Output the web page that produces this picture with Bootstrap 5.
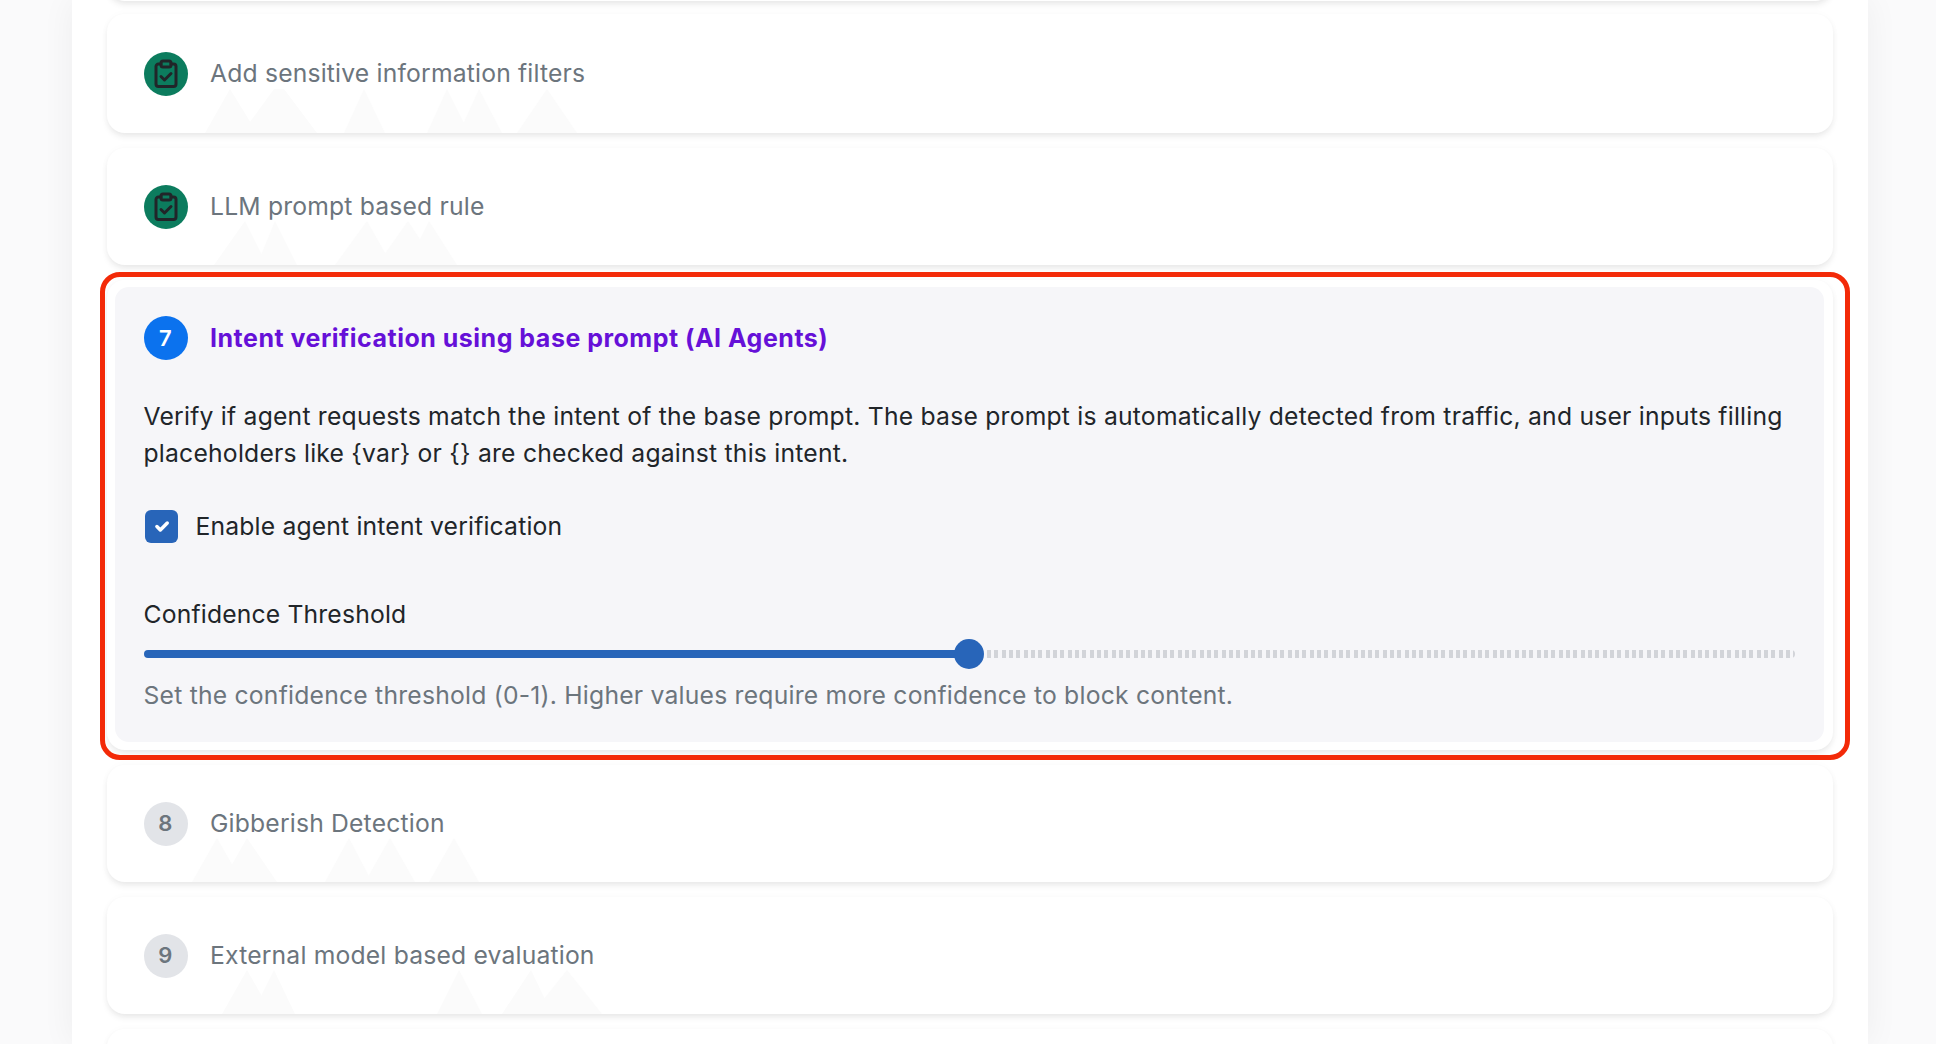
<!DOCTYPE html>
<html lang="en">
<head>
<meta charset="utf-8">
<title>Rules</title>
<link href="https://cdn.jsdelivr.net/npm/bootstrap@5.3.0/dist/css/bootstrap.min.css" rel="stylesheet">
<style>
html,body{height:1044px;overflow:hidden}
body{background:#fafafb;font-family:Inter,"Liberation Sans",sans-serif;font-size:24.7px;line-height:37px;letter-spacing:.22px;color:#212529}
.sheet{margin:0 68px 0 72px;height:1044px;background:#fff;box-shadow:0 0 32px rgba(0,0,0,.055);padding:0 35px;overflow:hidden}
.stack{gap:15px;margin-top:-116px}
.step{height:117px;border:0;border-radius:18px;background:#fff;box-shadow:0 4px 7px -1px rgba(0,0,0,.09),0 0 8px rgba(0,0,0,.025);position:relative;padding:0 36.5px;color:#6c757d}
.step-stub{margin-bottom:-2px}
.step-tall{height:119px}
.ghost{position:absolute;left:0;bottom:0;width:600px;height:44px}
.ghost polygon{fill:#fbfbfb}
.dot{width:44px;height:44px;flex:none;border-radius:50%;margin-right:22.5px;font-weight:600;font-size:22px;position:relative}
.dot-done{background:#0c7c5e}
.dot-idle{background:#e2e4e8;color:#6c757d}
.dot-now{background:#0b72ee;color:#fff}
.step-label{position:relative;letter-spacing:.18px}
.active-wrap{position:relative}
.step-open{height:auto;padding:7px 9px 8.5px 7.5px;color:#212529}
.open-inner{background:#f6f6f9;border-radius:14px;padding:29px 29px 28px}
.open-title{font-weight:700;font-size:25px;letter-spacing:.5px;color:#6610d8}
.open-text{margin:37.5px 0 36px}
.check-row{margin:0 0 51px;padding:0;min-height:37px;display:flex;align-items:center;letter-spacing:.17px}
.check-row .form-check-input{width:33px;height:33px;margin:0 17.5px 0 1.5px;float:none;border:0;border-radius:6px;background-size:23px;background-color:#2865b9}
.check-row .form-check-label{opacity:1}
.range-label{margin:0 0 6.5px;display:block;letter-spacing:.17px}
.slider{display:block;height:30px;padding:0;background:transparent}
.slider::-webkit-slider-runnable-track{height:8px;border-radius:4px;background:
  linear-gradient(#2865b9,#2865b9) left/826px 100% no-repeat,
  repeating-linear-gradient(90deg,#d2d4d9 0 4px,transparent 4px 7.33px) 843px 0/810px 100% no-repeat}
.slider::-webkit-slider-thumb{width:30px;height:30px;margin-top:-11px;background:#2865b9;border:0;border-radius:50%;-webkit-appearance:none}
.slider:focus::-webkit-slider-thumb{box-shadow:none}
.hint{margin:7.5px 0 0;color:#6c757d}
.callout{position:absolute;left:-7px;right:-17px;top:-8px;bottom:-10px;border:5px solid #f32a08;border-radius:20px;pointer-events:none}
</style>
</head>
<body>
<div class="sheet">
  <div class="stack d-flex flex-column">
    <div class="card step step-stub"></div>

    <div class="card step step-tall flex-row align-items-center">
      <svg class="ghost" viewBox="0 0 600 44"><polygon points="98,44 123,0 150,44"/><polygon points="135,44 167,0 177,0 210,44"/><polygon points="237,44 257,0 278,44"/><polygon points="320,44 340,0 362,44"/><polygon points="352,44 372,0 395,44"/><polygon points="410,44 440,0 470,44"/></svg>
      <span class="dot dot-done d-flex align-items-center justify-content-center">
        <svg width="26" height="30" viewBox="0 0 26 30" fill="none" stroke="#212529" stroke-width="3" stroke-linejoin="round" stroke-linecap="round"><path d="M8 5H5.5A2.5 2.5 0 0 0 3 7.500V25a2.500 2.500 0 0 0 2.500 2.500h15A2.500 2.500 0 0 0 23 25V7.500A2.500 2.500 0 0 0 20.500 5H18"/><rect x="8" y="2" width="10" height="6" rx="2"/><path d="M8 17.500l3.500 3.500 6.500-6.500"/></svg>
      </span>
      <span class="step-label">Add sensitive information filters</span>
    </div>

    <div class="card step flex-row align-items-center">
      <svg class="ghost" viewBox="0 0 600 44"><polygon points="107,44 138,0 160,44"/><polygon points="150,44 168,0 190,44"/><polygon points="228,44 260,0 285,44"/><polygon points="270,44 301,0 330,44"/><polygon points="300,44 322,0 350,44"/></svg>
      <span class="dot dot-done d-flex align-items-center justify-content-center">
        <svg width="26" height="30" viewBox="0 0 26 30" fill="none" stroke="#212529" stroke-width="3" stroke-linejoin="round" stroke-linecap="round"><path d="M8 5H5.500A2.500 2.500 0 0 0 3 7.500V25a2.500 2.500 0 0 0 2.500 2.500h15A2.500 2.500 0 0 0 23 25V7.500A2.500 2.500 0 0 0 20.500 5H18"/><rect x="8" y="2" width="10" height="6" rx="2"/><path d="M8 17.500l3.500 3.500 6.500-6.500"/></svg>
      </span>
      <span class="step-label">LLM prompt based rule</span>
    </div>

    <div class="active-wrap">
      <div class="card step step-open">
        <div class="open-inner">
          <div class="d-flex align-items-center">
            <span class="dot dot-now d-flex align-items-center justify-content-center">7</span>
            <span class="open-title">Intent verification using base prompt (AI Agents)</span>
          </div>
          <p class="open-text">Verify if agent requests match the intent of the base prompt. The base prompt is automatically detected from traffic, and user inputs filling placeholders like {var} or {} are checked against this intent.</p>
          <div class="form-check check-row">
            <input class="form-check-input" type="checkbox" id="agentIntent" checked>
            <label class="form-check-label" for="agentIntent">Enable agent intent verification</label>
          </div>
          <label class="form-label range-label" for="confidence">Confidence Threshold</label>
          <input class="form-range slider" type="range" id="confidence" min="0" max="1" step="0.01" value="0.5">
          <p class="hint">Set the confidence threshold (0-1). Higher values require more confidence to block content.</p>
        </div>
      </div>
      <div class="callout"></div>
    </div>

    <div class="card step flex-row align-items-center">
      <svg class="ghost" viewBox="0 0 600 44"><polygon points="85,44 110,0 135,44"/><polygon points="115,44 140,0 170,44"/><polygon points="218,44 242,0 265,44"/><polygon points="258,44 283,0 308,44"/><polygon points="322,44 347,0 372,44"/></svg>
      <span class="dot dot-idle d-flex align-items-center justify-content-center">8</span>
      <span class="step-label">Gibberish Detection</span>
    </div>

    <div class="card step flex-row align-items-center">
      <svg class="ghost" viewBox="0 0 600 44"><polygon points="115,44 140,0 165,44"/><polygon points="145,44 167,0 188,44"/><polygon points="330,44 352,0 375,44"/><polygon points="395,44 424,0 445,44"/><polygon points="425,44 460,0 495,44"/></svg>
      <span class="dot dot-idle d-flex align-items-center justify-content-center">9</span>
      <span class="step-label">External model based evaluation</span>
    </div>

    <div class="card step"></div>
  </div>
</div>
<script src="https://cdn.jsdelivr.net/npm/bootstrap@5.3.0/dist/js/bootstrap.bundle.min.js"></script>
</body>
</html>
